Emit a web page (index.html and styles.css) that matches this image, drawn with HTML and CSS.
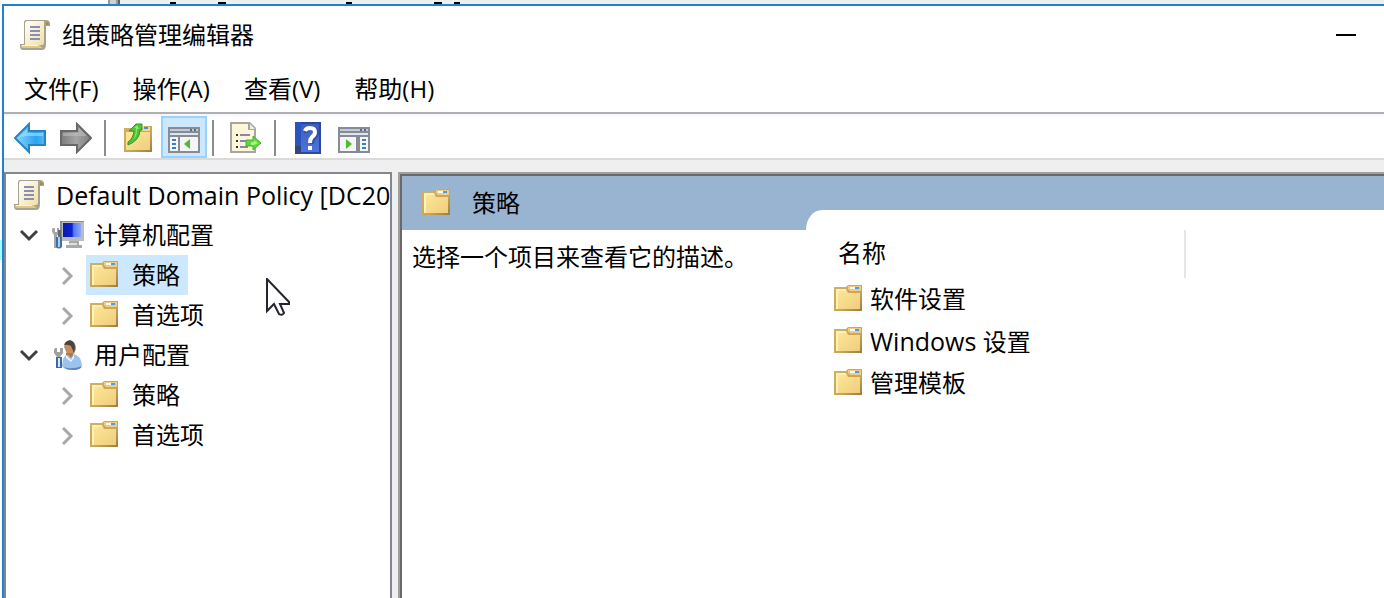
FILE: index.html
```html
<!doctype html>
<html lang="zh-CN">
    <head>
        <meta charset="utf-8" />
        <title>组策略管理编辑器</title>
        <link rel="stylesheet" href="styles.css" />
    </head>
    <body>
        <!-- Shared icons -->
        <svg class="defs" aria-hidden="true">
            <defs>
                <linearGradient id="g-folder" x1="0" y1="0" x2="1" y2="1">
                    <stop offset="0" stop-color="#ffe898" />
                    <stop offset="1" stop-color="#efcd7e" />
                </linearGradient>
                <linearGradient id="g-edge" x1="0" y1="0" x2="1" y2="1">
                    <stop offset="0" stop-color="#d2b260" />
                    <stop offset="0.6" stop-color="#c8a55a" />
                    <stop offset="1" stop-color="#9c7c3e" />
                </linearGradient>
                <linearGradient id="g-paper" x1="0" y1="0" x2="1" y2="1">
                    <stop offset="0" stop-color="#ffffff" />
                    <stop offset="1" stop-color="#f0e0a4" />
                </linearGradient>
                <linearGradient id="g-blue" x1="0" y1="0" x2="1" y2="0">
                    <stop offset="0" stop-color="#8fd6fc" />
                    <stop offset="0.7" stop-color="#2ba4f1" />
                    <stop offset="1" stop-color="#55b8f5" />
                </linearGradient>
                <linearGradient id="g-grey" x1="0" y1="0" x2="1" y2="0">
                    <stop offset="0" stop-color="#7c7c7c" />
                    <stop offset="0.5" stop-color="#a5a5a5" />
                    <stop offset="1" stop-color="#808080" />
                </linearGradient>
                <linearGradient id="g-screen" x1="0" y1="0" x2="1" y2="0">
                    <stop offset="0" stop-color="#0a1aa8" />
                    <stop offset="0.5" stop-color="#0c20d8" />
                    <stop offset="0.6" stop-color="#5878ee" />
                    <stop offset="1" stop-color="#8ca8f8" />
                </linearGradient>
                <linearGradient id="g-help" x1="0" y1="0" x2="0" y2="1">
                    <stop offset="0" stop-color="#3d5dc0" />
                    <stop offset="1" stop-color="#4a74dc" />
                </linearGradient>
            </defs>

            <symbol id="i-folder" viewBox="0 0 32 32">
                <path d="M0 4h12l2-2h14v26H0z" fill="url(#g-edge)" />
                <path d="M2 6h10l2 4h12v16H2z" fill="url(#g-folder)" />
                <path d="M2 6h10v2H4v18H2z" fill="#fff2b8" />
                <path d="M14 3h13v5H16l-2-2z" fill="#f0cc80" />
                <path d="M16 4h5v2h-5z" fill="#fff" />
                <path d="M21 4h4v2h-4z" fill="#4a9be8" />
            </symbol>

            <symbol id="i-scroll" viewBox="0 0 32 32">
                <path d="M6 1h20q4 0 4 4v2h-4v18q0 6-4 6H3q-3 0-3-4v-2h4V4q0-3 2-3z" fill="#a8a290" />
                <path d="M7 2h17v21q0 3-2 3H5V5q0-3 2-3z" fill="url(#g-paper)" />
                <path d="M26 3q3 0 3 3h-3z" fill="#a58b45" />
                <path d="M1 26h19q1 3 3 3H3q-2 0-2-3z" fill="#dfc984" />
                <path d="M2 26h16v1H2z" fill="#fff8d8" />
                <path d="M10 8h10M10 12h10M10 16h10M10 20h10" stroke="#8d8db4" stroke-width="2" />
            </symbol>

            <symbol id="i-computer" viewBox="0 0 32 32">
                <path d="M8 2h24v20H8z" fill="#b9bdbd" />
                <path d="M8 2h24v1H10v19H8z" fill="#878d91" />
                <path d="M11 4h18v14H11z" fill="url(#g-screen)" />
                <path d="M17 22h10v4h3v3H14v-3h3z" fill="#a7a9aa" />
                <path d="M17 24h8v2h-8z" fill="#dedede" />
                <path d="M1 9h2v4h2V9h2v5l-2 3v12H2V16l-2-3v-3z" fill="#a2a6a6" />
                <path d="M4 18h6v10q-3 3-6 0z" fill="#416fa5" />
                <path d="M6 18h2v10H6z" fill="#a9d0f1" />
                <path d="M6 11h3v7H6z" fill="#646b70" />
            </symbol>

            <symbol id="i-user" viewBox="0 0 32 32">
                <path d="M12 8q1-6 6-6 6 0 6 8l-2 5h-7z" fill="#c78d60" />
                <path d="M12 6q1-4 6-5 5 1 5 8l-1 5-3-7q-4-2-7-1z" fill="#4a4440" />
                <path d="M14 14h7v5h-7z" fill="#b3764e" />
                <path d="M11 20q2-4 5-4l3 3 3-4q7 2 8 11-2 5-10 5-8 0-10-4z" fill="#9bc3eb" />
                <path d="M12 28q8 3 18-1-1 4-9 4-7 0-9-3z" fill="#5b87be" />
                <path d="M14 16l5 5 3-5v3l-3 4-5-4z" fill="#eef5fb" />
                <path d="M3 9h2v4h3V9h3v5l-3 4H5l-3-4v-3z" fill="#a0a09c" />
                <path d="M4 18h6v11H4z" fill="#3d68a2" />
                <path d="M6 19h2v9H6z" fill="#d4e8fa" />
            </symbol>

            <symbol id="i-open" viewBox="0 0 22 22">
                <path d="M3 7l8 8 8-8" fill="none" stroke="#3f3f3f" stroke-width="3" />
            </symbol>

            <symbol id="i-closed" viewBox="0 0 22 22">
                <path d="M7 4l8 8-8 8" fill="none" stroke="#a8a8a8" stroke-width="3" />
            </symbol>
        </svg>

        <!-- Edge of the window behind -->
        <svg class="behind" aria-hidden="true">
            <path d="M108 0h12v4h-12z" fill="#9a9a9a" />
            <path d="M110 0h6v4h-6z" fill="#d0d0d0" />
            <path d="M118 0h2v4h-2z" fill="#606060" />
            <path d="M170 2h6v2h-6zM218 2h8v2h-8zM346 2h6v2h-6zM434 2h8v2h-8zM454 2h6v2h-6z" />
        </svg>

        <div class="window">
            <header class="titlebar">
                <svg class="icon"><use href="#i-scroll" /></svg>
                <h1 class="title">组策略管理编辑器</h1>
                <button class="minimize" aria-label="最小化"></button>
            </header>

            <nav class="menu">
                <button>文件(F)</button>
                <button>操作(A)</button>
                <button>查看(V)</button>
                <button>帮助(H)</button>
            </nav>

            <div class="toolbar">
                <button aria-label="后退">
                    <svg class="icon" viewBox="0 0 32 32">
                        <path d="M1 16L15 2v7h16v14H15v7z" fill="url(#g-blue)" stroke="#2683c4" stroke-width="2" />
                        <path d="M5 15l8-8v4h16v3H13z" fill="#a9e1ff" opacity="0.6" />
                    </svg>
                </button>
                <button aria-label="前进">
                    <svg class="icon" viewBox="0 0 32 32">
                        <path d="M31 16L17 2v7H1v14h16v7z" fill="url(#g-grey)" stroke="#686868" stroke-width="2" />
                        <path d="M3 11h16V6l8 8H3z" fill="#c5c5c5" opacity="0.5" />
                    </svg>
                </button>
                <span class="separator"></span>
                <button aria-label="上移一级">
                    <svg class="icon" viewBox="0 0 32 32">
                        <path d="M2 6h18l2-2h8v26H2z" fill="url(#g-edge)" />
                        <path d="M4 10h24v18H4z" fill="url(#g-folder)" />
                        <path d="M20 5h8v4h-8z" fill="#f6d88e" />
                        <path d="M22 5h4v2h-4z" fill="#3f8fe0" />
                        <path d="M6 20q5-3 6-11H7l7-7h6v6h-2q0 10-12 15z" fill="#4dc534" stroke="#36922a" />
                        <path d="M12 6l3-3 2 4h-2q0 7-3 10 2-5 2-11z" fill="#8fe86f" />
                    </svg>
                </button>
                <button class="on" aria-label="显示/隐藏控制台树" aria-pressed="true">
                    <svg class="icon" viewBox="0 0 32 32">
                        <path d="M0 5h32v26H0z" fill="#868b94" />
                        <path d="M2 7h28v2H2z" fill="#c4cad8" />
                        <path d="M22 7h2v2h-2zM26 7h2v2h-2z" fill="#596887" />
                        <path d="M2 11h28v2H2z" fill="#dfe4ee" />
                        <path d="M2 15h8v14H2zM12 15h18v14H12z" fill="#f5f5f5" />
                        <path d="M4 18h4M4 22h4M4 26h4" stroke="#3c7fc0" stroke-width="2" />
                        <path d="M22 17v10l-6-5z" fill="#4fb92e" />
                    </svg>
                </button>
                <span class="separator"></span>
                <button aria-label="导出列表">
                    <svg class="icon" viewBox="0 0 32 32">
                        <path d="M0 0h20l6 6v25H0z" fill="#a8a6a0" />
                        <path d="M2 2h16v6h6v21H2z" fill="#fdf6d8" />
                        <path d="M20 2v5h5z" fill="#eee" />
                        <path d="M6 12h2v2H6zM6 18h2v2H6zM6 24h2v2H6z" fill="#333" />
                        <path d="M10 13h10M10 19h8M10 25h8" stroke="#8a86ab" stroke-width="2" />
                        <path d="M16 18h7v-4l8 7-8 7v-4h-7z" fill="#62d43c" stroke="#4bb32d" />
                        <path d="M21 20h3v-2l4 3-4 2h-3z" fill="#a4f584" />
                    </svg>
                </button>
                <span class="separator"></span>
                <button aria-label="帮助">
                    <svg class="icon" viewBox="0 0 32 32">
                        <path d="M3 0h26v32H3z" fill="#2c479f" />
                        <path d="M3 0h6v32H3z" fill="#2b53c0" />
                        <path d="M3 24h6v8H3z" fill="#324777" />
                        <path d="M9 2h18v28H9z" fill="url(#g-help)" />
                        <path d="M14 11q0-5 5-5 6 0 6 5 0 3-3 5-2 2-2 6" fill="none" stroke="#27387a" stroke-width="4" opacity="0.5" />
                        <path d="M13 9q1-3 5-3 5 0 5 4 0 3-3 5-2 2-2 6" fill="none" stroke="#fff" stroke-width="4" />
                        <path d="M16 24h4v4h-4z" fill="#fff" />
                    </svg>
                </button>
                <button aria-label="显示/隐藏操作窗格">
                    <svg class="icon" viewBox="0 0 32 32">
                        <path d="M0 5h32v26H0z" fill="#868b94" />
                        <path d="M2 7h28v2H2z" fill="#c4cad8" />
                        <path d="M22 7h2v2h-2zM26 7h2v2h-2z" fill="#596887" />
                        <path d="M2 11h28v2H2z" fill="#dfe4ee" />
                        <path d="M2 15h16v14H2zM22 15h8v14h-8z" fill="#f5f5f5" />
                        <path d="M24 18h4M24 22h4M24 26h4" stroke="#3c7fc0" stroke-width="2" />
                        <path d="M8 17v10l6-5z" fill="#4fb92e" />
                    </svg>
                </button>
            </div>

            <main class="panes">
                <nav class="tree">
                    <a class="root" href="#">
                        <svg class="icon"><use href="#i-scroll" /></svg>
                        <span class="latin">Default Domain Policy [DC20</span>
                    </a>
                    <ul>
                        <li>
                            <div class="node">
                                <button class="toggle" aria-label="折叠"><svg><use href="#i-open" /></svg></button>
                                <a class="label" href="#"><svg class="icon"><use href="#i-computer" /></svg>计算机配置</a>
                            </div>
                            <ul>
                                <li class="node">
                                    <button class="toggle" aria-label="展开"><svg><use href="#i-closed" /></svg></button>
                                    <a class="label selected" href="#"><svg class="icon"><use href="#i-folder" /></svg>策略</a>
                                </li>
                                <li class="node">
                                    <button class="toggle" aria-label="展开"><svg><use href="#i-closed" /></svg></button>
                                    <a class="label" href="#"><svg class="icon"><use href="#i-folder" /></svg>首选项</a>
                                </li>
                            </ul>
                        </li>
                        <li>
                            <div class="node">
                                <button class="toggle" aria-label="折叠"><svg><use href="#i-open" /></svg></button>
                                <a class="label" href="#"><svg class="icon"><use href="#i-user" /></svg>用户配置</a>
                            </div>
                            <ul>
                                <li class="node">
                                    <button class="toggle" aria-label="展开"><svg><use href="#i-closed" /></svg></button>
                                    <a class="label" href="#"><svg class="icon"><use href="#i-folder" /></svg>策略</a>
                                </li>
                                <li class="node">
                                    <button class="toggle" aria-label="展开"><svg><use href="#i-closed" /></svg></button>
                                    <a class="label" href="#"><svg class="icon"><use href="#i-folder" /></svg>首选项</a>
                                </li>
                            </ul>
                        </li>
                    </ul>
                </nav>

                <section class="details">
                    <div class="info">
                        <h2><svg class="icon"><use href="#i-folder" /></svg>策略</h2>
                        <p>选择一个项目来查看它的描述。</p>
                    </div>
                    <div class="items">
                        <div class="sheet">
                            <table>
                                <thead>
                                    <tr><th>名称</th></tr>
                                </thead>
                                <tbody>
                                    <tr><td><a href="#"><svg class="icon"><use href="#i-folder" /></svg>软件设置</a></td></tr>
                                    <tr><td><a href="#"><svg class="icon"><use href="#i-folder" /></svg><span><span class="latin">Windows </span>设置</span></a></td></tr>
                                    <tr><td><a href="#"><svg class="icon"><use href="#i-folder" /></svg>管理模板</a></td></tr>
                                </tbody>
                            </table>
                        </div>
                    </div>
                </section>
            </main>
        </div>

        <svg class="cursor" viewBox="0 0 26 40" aria-hidden="true">
            <path d="M1 1v32l7-7 5 10q3 2 5-1l-4-9h9v-2z" fill="#fff" stroke="#25252f" stroke-width="2" />
        </svg>
    </body>
</html>
```
FILE: styles.css
```css
* {
    box-sizing: border-box;
}
body {
    margin: 0;
    padding-left: 2px;
    height: 100vh;
    display: flex;
    flex-direction: column;
    overflow: hidden;
    background: linear-gradient(#a0ffff, #a0ffff) 0 240px / 2px 20px no-repeat white;
    color: black;
    font: 24px/32px "Open Sans", "Noto Sans CJK SC", sans-serif;
}
button {
    margin: 0;
    padding: 0;
    border: 0;
    background: none;
    color: inherit;
    font: inherit;
}
a {
    color: inherit;
    text-decoration: none;
}
ul {
    margin: 0;
    padding: 0;
    list-style: none;
}
.defs {
    position: absolute;
    width: 0;
    height: 0;
}
.icon {
    display: block;
    flex: none;
    width: 32px;
    height: 32px;
}
.latin {
    font-size: 25px;
}

/* window frame */
.behind {
    display: block;
    flex: none;
    margin-left: -2px;
    width: 100vw;
    height: 4px;
    background: linear-gradient(to right, white 108px, #efefef 108px);
}
.window {
    flex: 1;
    min-height: 0;
    display: flex;
    flex-direction: column;
    border-top: 2px solid #1b82d6;
    border-left: 2px solid #1b82d6;
    background: #efefef;
}
.titlebar {
    display: flex;
    align-items: center;
    gap: 10px;
    height: 58px;
    padding: 0 28px 0 16px;
    background: white;
}
.title {
    flex: 1;
    margin: 0;
    font-size: 24px;
    font-weight: normal;
}
.minimize {
    width: 20px;
    height: 2px;
    background: black;
}
.menu {
    display: flex;
    gap: 34px;
    height: 50px;
    padding: 2px 20px 0;
    border-bottom: 2px solid #b0b0b3;
    background: white;
}

/* toolbar */
.toolbar {
    display: flex;
    height: 46px;
    padding-left: 3px;
    border-top: 2px solid #f4f7fc;
    border-bottom: 2px solid #dadada;
    background: white;
}
.toolbar button {
    display: flex;
    align-items: center;
    justify-content: center;
    width: 46px;
    padding-top: 2px;
}
.toolbar .on {
    border: 2px solid #99d1ff;
    background: #cce8ff;
}
.separator {
    width: 2px;
    margin: 4px 9px 2px 5px;
    background: #8c8c8c;
}

/* tree */
.panes {
    flex: 1;
    min-height: 0;
    display: flex;
    gap: 6px;
    padding-top: 12px;
}
.tree {
    flex: none;
    width: 388px;
    padding-top: 1px;
    border: 2px solid #828790;
    border-bottom: 0;
    background: white;
    overflow: hidden;
    white-space: nowrap;
}
.root {
    display: flex;
    align-items: center;
    gap: 10px;
    height: 40px;
    padding-left: 8px;
}
.node {
    display: flex;
    align-items: center;
    gap: 8px;
    height: 40px;
    padding-left: 12px;
}
ul ul {
    padding-left: 38px;
}
.toggle,
.toggle svg {
    display: block;
    width: 22px;
    height: 22px;
}
.label {
    display: flex;
    align-items: center;
    gap: 10px;
    height: 40px;
    padding: 0 8px 0 4px;
}
.selected {
    background: #cce8ff;
}

/* details */
.details {
    flex: 1;
    display: flex;
    border-top: 2px solid #696969;
    border-left: 2px solid #696969;
    outline: 2px solid #a0a0a0;
    margin: 2px 0 0 2px;
    background: white;
}
.info {
    flex: none;
    width: 404px;
}
.info h2 {
    display: flex;
    align-items: center;
    gap: 18px;
    height: 54px;
    margin: 0;
    padding-left: 20px;
    background: #99b4d1;
    font-size: 24px;
    font-weight: normal;
}
.info p {
    margin: 0;
    padding: 11px 10px;
    white-space: nowrap;
}
.items {
    flex: 1;
    padding-top: 34px;
    background: linear-gradient(#99b4d1 54px, white 54px);
}
.sheet {
    padding-top: 20px;
    border-radius: 16px 0 0 0 / 20px 0 0 0;
    background: white;
}
table {
    width: 380px;
    border-collapse: collapse;
}
th {
    height: 48px;
    padding: 0 0 2px 32px;
    border-right: 2px solid #e5e5e5;
    font-weight: normal;
    text-align: left;
}
td {
    height: 42px;
    padding: 0 0 0 28px;
}
td a {
    display: flex;
    align-items: center;
    gap: 4px;
}

.cursor {
    position: absolute;
    left: 266px;
    top: 278px;
    width: 26px;
    height: 40px;
}
```
